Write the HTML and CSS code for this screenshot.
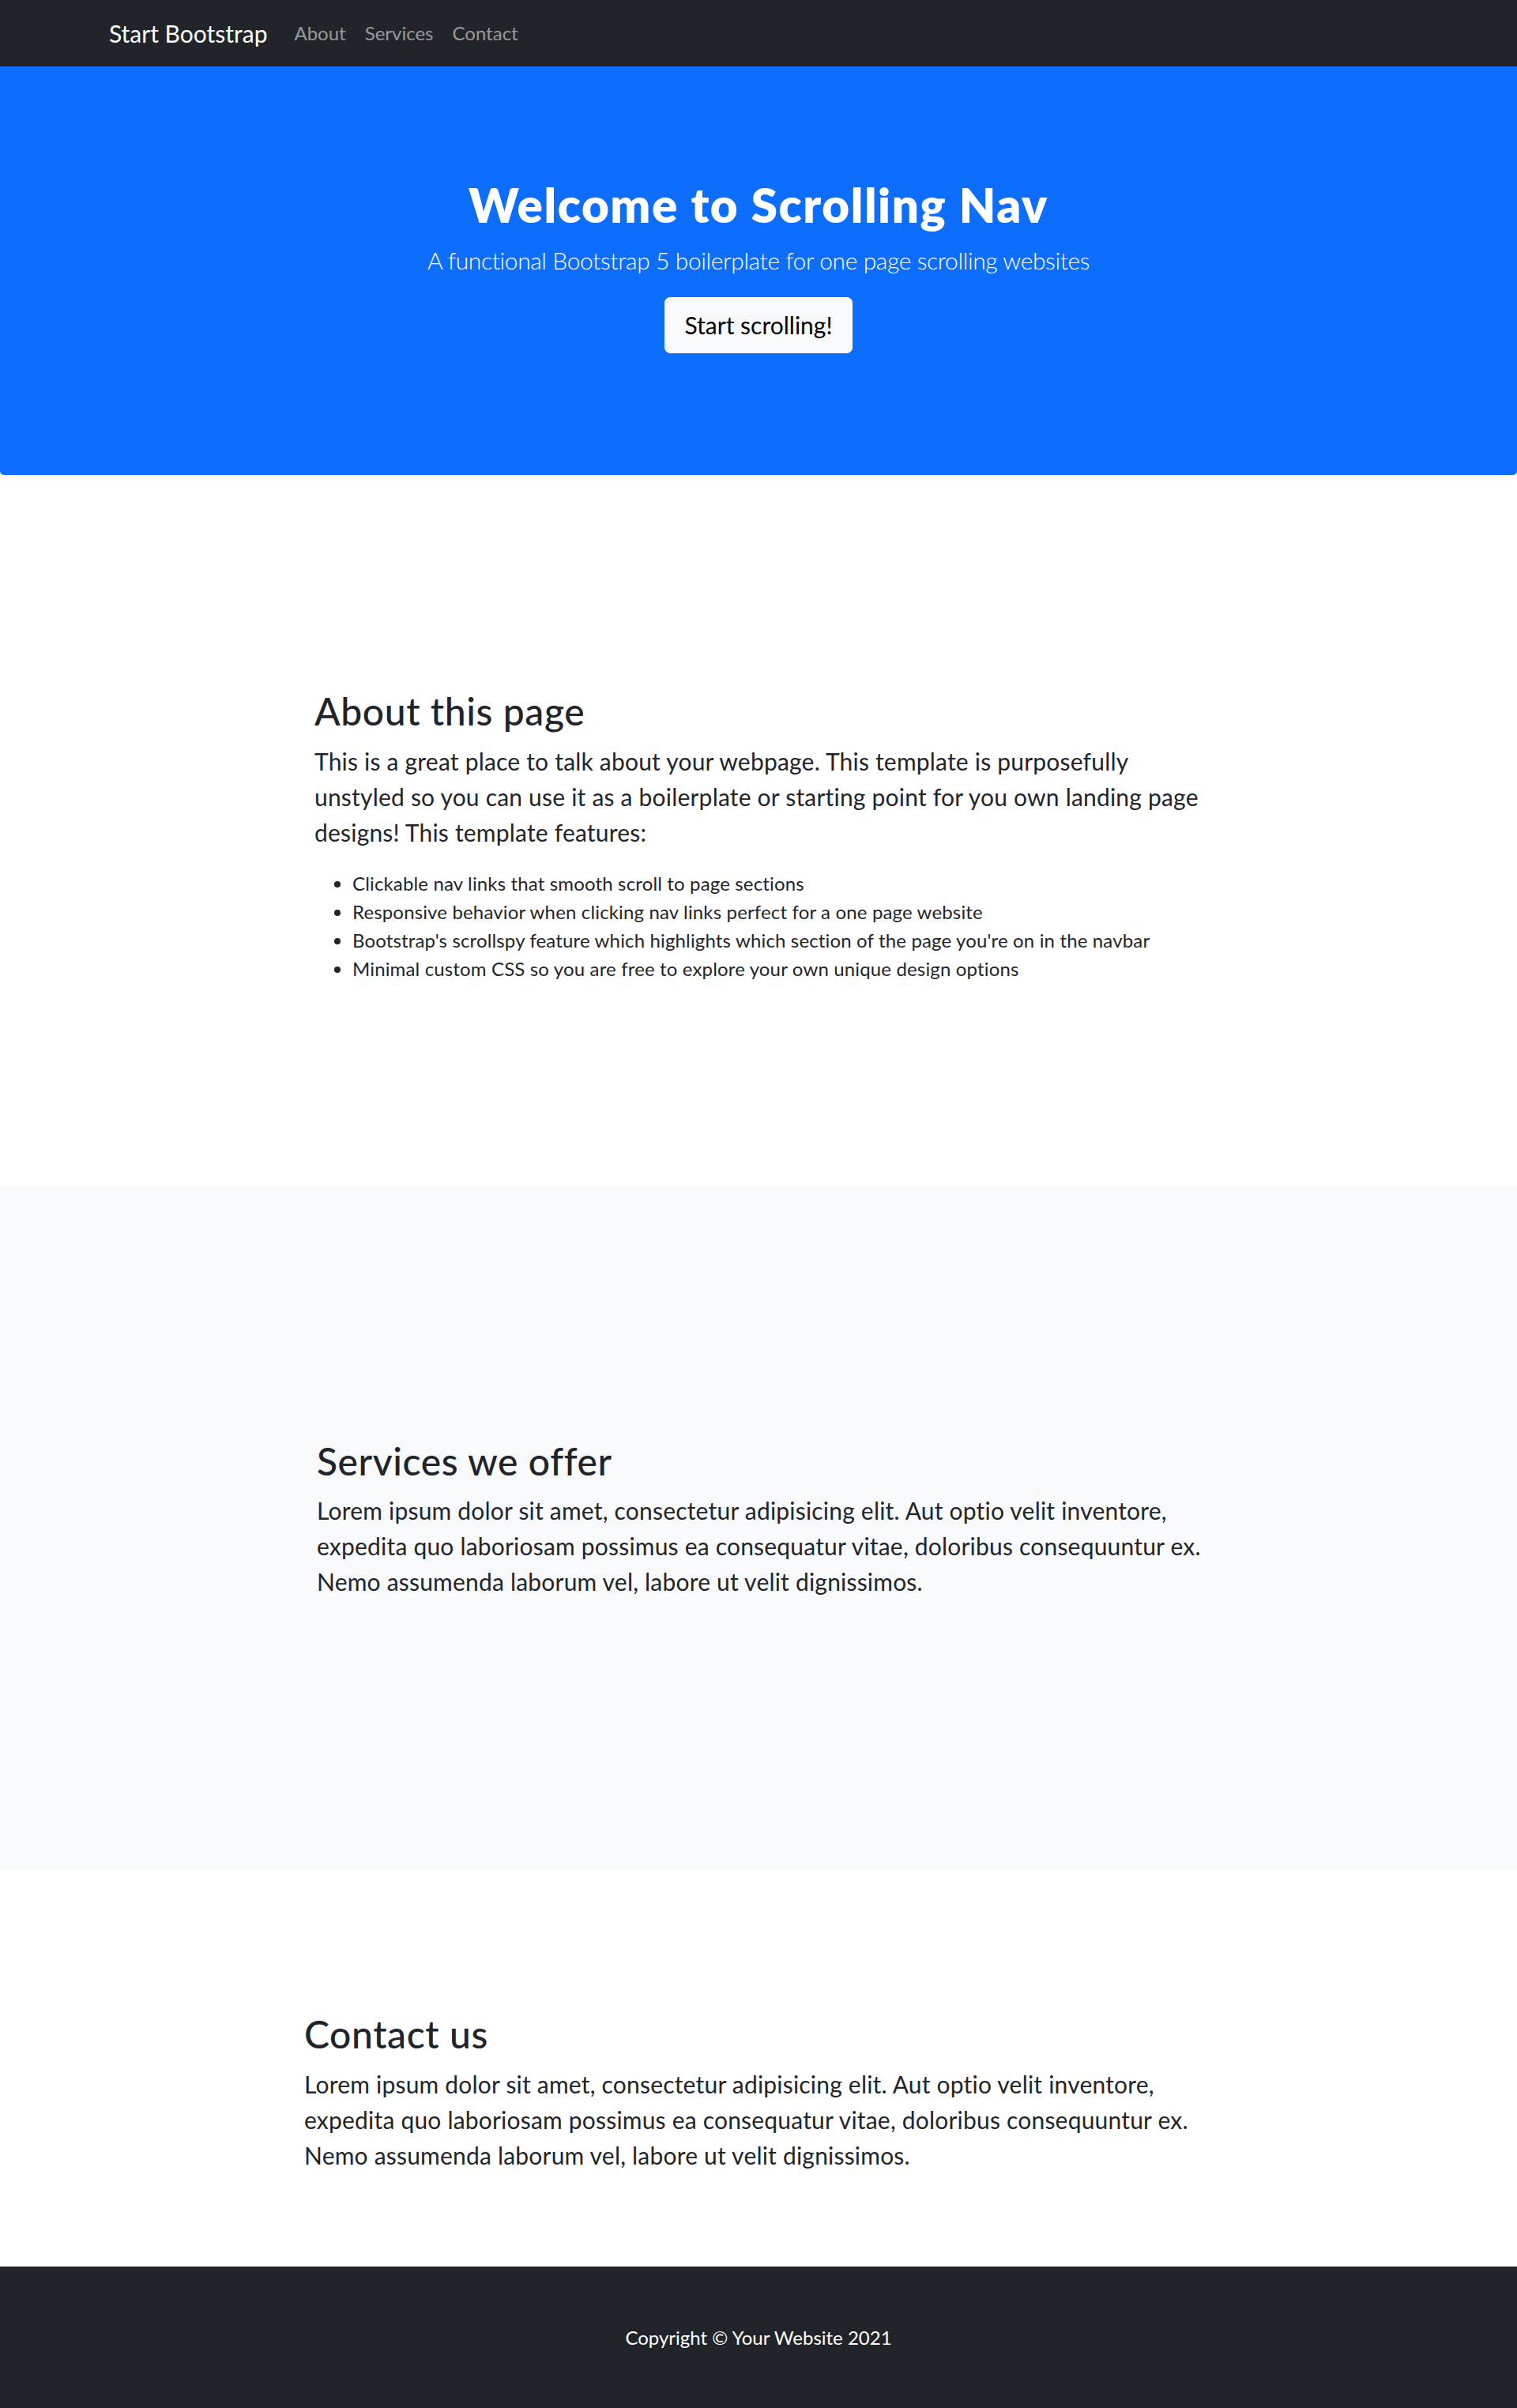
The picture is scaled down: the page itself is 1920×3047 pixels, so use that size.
FILE: index.html
```html
<!DOCTYPE html>
<html lang="en">
<head>
<meta charset="utf-8">
<title>Scrolling Nav - Start Bootstrap Template</title>
<link rel="stylesheet" href="styles.css">
</head>
<body>
<nav class="navbar">
  <a class="brand" href="#page-top">Start Bootstrap</a>
  <ul class="nav-links">
    <li><a href="#about">About</a></li>
    <li><a href="#services">Services</a></li>
    <li><a href="#contact">Contact</a></li>
  </ul>
</nav>
<header class="hero">
  <h1 class="hero-title">Welcome to Scrolling Nav</h1>
  <p class="hero-lead">A functional Bootstrap 5 boilerplate for one page scrolling websites</p>
  <a class="btn-light" href="#about">Start scrolling!</a>
</header>
<section class="section section-about" id="about">
  <div class="content content-about">
    <h2 class="section-title">About this page</h2>
    <p class="lead">This is a great place to talk about your webpage. This template is purposefully unstyled so you can use it as a boilerplate or starting point for you own landing page designs! This template features:</p>
    <ul class="features">
      <li>Clickable nav links that smooth scroll to page sections</li>
      <li>Responsive behavior when clicking nav links perfect for a one page website</li>
      <li>Bootstrap's scrollspy feature which highlights which section of the page you're on in the navbar</li>
      <li>Minimal custom CSS so you are free to explore your own unique design options</li>
    </ul>
  </div>
</section>
<section class="section section-services" id="services">
  <div class="content content-services">
    <h2 class="section-title">Services we offer</h2>
    <p class="lead">Lorem ipsum dolor sit amet, consectetur adipisicing elit. Aut optio velit inventore, expedita quo laboriosam possimus ea consequatur vitae, doloribus consequuntur ex. Nemo assumenda laborum vel, labore ut velit dignissimos.</p>
  </div>
</section>
<section class="section section-contact" id="contact">
  <div class="content content-contact">
    <h2 class="section-title">Contact us</h2>
    <p class="lead">Lorem ipsum dolor sit amet, consectetur adipisicing elit. Aut optio velit inventore, expedita quo laboriosam possimus ea consequatur vitae, doloribus consequuntur ex. Nemo assumenda laborum vel, labore ut velit dignissimos.</p>
  </div>
</section>
<footer class="footer">
  <p class="copyright">Copyright &copy; Your Website 2021</p>
</footer>
</body>
</html>
```
FILE: styles.css
```css
* { box-sizing: border-box; }
html, body { margin: 0; padding: 0; }
body {
  font-family: Lato, "Open Sans", "Liberation Sans", sans-serif;
  font-size: 24px;
  line-height: 1.5;
  color: #212529;
  background: #fff;
}
a { text-decoration: none; }

.navbar {
  height: 84px;
  background: #212529;
  display: flex;
  align-items: center;
  padding-left: 138px;
}
.brand {
  color: #fff;
  font-size: 30px;
  line-height: 45px;
  margin-right: 22px;
}
.nav-links {
  list-style: none;
  margin: 0;
  padding: 0;
  display: flex;
}
.nav-links a {
  display: block;
  padding: 0 12px;
  font-size: 24px;
  line-height: 36px;
  color: rgba(255, 255, 255, 0.55);
}

.hero {
  background: #0d6efd;
  color: #fff;
  text-align: center;
  padding: 139px 24px 154px;
  border-radius: 0 0 5px 5px;
}
.hero-title {
  margin: 0 0 12px;
  font-size: 60px;
  line-height: 1.2;
  font-weight: 800;
  letter-spacing: 1.6px;
}
.hero-lead {
  margin: 0 0 24px;
  font-size: 30px;
  line-height: 45px;
  font-weight: 300;
  letter-spacing: -0.4px;
}
.btn-light {
  display: inline-block;
  background: #f8f9fa;
  border: 1px solid #f8f9fa;
  color: #000;
  font-size: 30px;
  line-height: 45px;
  padding: 12px 24px;
  border-radius: 7px;
}

.section-about { padding: 270px 0 233px; }
.section-services { background: #f8f9fa; padding: 319px 0 318px; }
.section-contact { padding: 179px 0 94px; }

.content-about { width: 1135px; margin-left: 398px; }
.content-services { width: 1135px; margin-left: 401px; }
.content-contact { width: 1150px; margin-left: 385px; }

.section-title {
  margin: 0 0 12px;
  font-size: 48px;
  line-height: 1.2;
  font-weight: 500;
  letter-spacing: 0.6px;
}
.lead {
  margin: 0 0 24px;
  font-size: 30px;
  line-height: 45px;
  font-weight: 400;
  letter-spacing: 0.2px;
}
.features {
  margin: 0 0 24px;
  padding-left: 48px;
  font-size: 24px;
  line-height: 36px;
  letter-spacing: 0.15px;
}

.footer {
  background: #212529;
  padding: 72px 0;
  text-align: center;
}
.copyright {
  margin: 0;
  color: #fff;
  font-size: 24px;
  line-height: 36px;
}
```
